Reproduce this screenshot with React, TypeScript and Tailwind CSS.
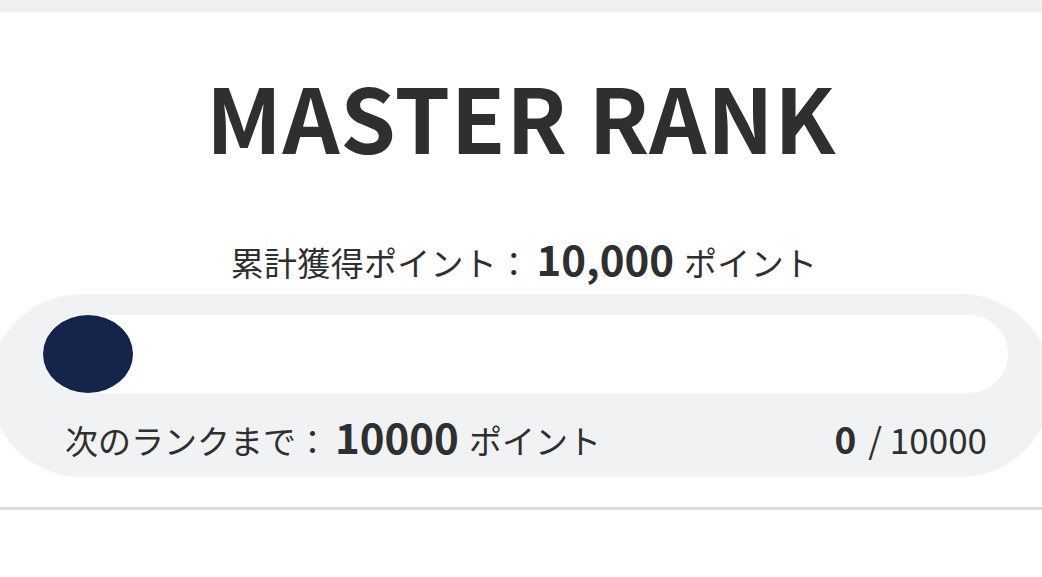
import React from "react";

export default function App() {
  return (
    <div
      className="w-[1042px] h-[577px] bg-white overflow-hidden text-[#2f2f2f]"
      style={{ fontFamily: '"Noto Sans CJK JP", "Noto Sans", sans-serif' }}
    >
      <div className="h-[12px] bg-[#f1f0ee]" />
      <h1 className="mt-[54px] text-center text-[89px] font-bold leading-[100px] tracking-[0.7px]">
        MASTER RANK
      </h1>
      <div className="mt-[67px] flex items-baseline justify-center pl-[6px] text-[33px] leading-[50px] tracking-[0.3px]">
        <span>累計獲得ポイント：</span>
        <span className="ml-[6px] text-[42px] font-bold tracking-[0px]">10,000</span>
        <span className="ml-[10px]">ポイント</span>
      </div>
      <div className="mx-[-10px] mt-[7px] h-[183px] rounded-full bg-[#f1f2f4] pl-[53px] pr-[44px] pt-[21px]">
        <div className="h-[78px] rounded-full bg-white">
          <div className="h-full w-[90px] rounded-[50%] bg-[#15244b]" />
        </div>
        <div className="mt-[18px] flex items-baseline justify-between pl-[22px] pr-[21px] text-[33px] leading-[50px]">
          <div className="flex items-baseline">
            <span>次のランクまで：</span>
            <span className="ml-[6px] text-[42px] font-bold">10000</span>
            <span className="ml-[10px]">ポイント</span>
          </div>
          <div className="flex items-baseline text-[35px]">
            <span className="text-[37px] font-bold">0</span>
            <span className="ml-[12px]">/ 10000</span>
          </div>
        </div>
      </div>
      <div className="mt-[30px] h-[3px] bg-[#dcdcdc]" />
    </div>
  );
}
